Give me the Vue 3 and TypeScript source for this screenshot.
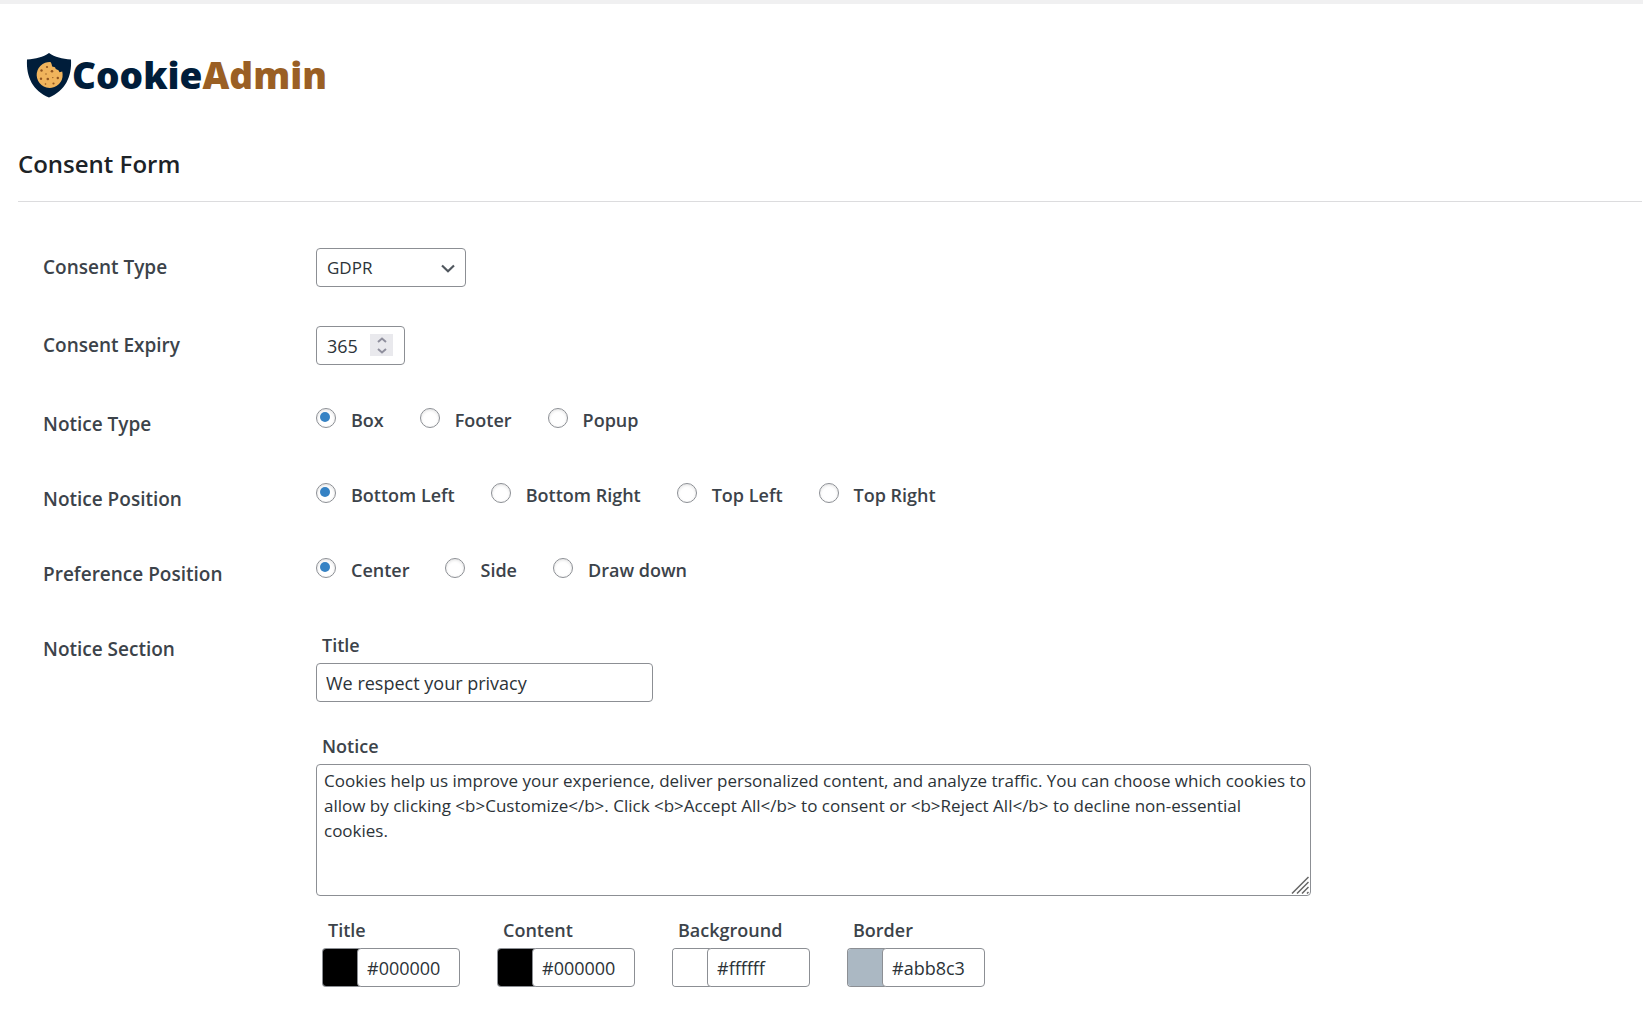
<script setup lang="ts">
import { reactive } from 'vue'

interface RadioRow {
  key: 'noticeType' | 'noticePosition' | 'preferencePosition'
  label: string
  options: string[]
}

interface ColorField {
  id: string
  label: string
  value: string
}

const radioRows: RadioRow[] = [
  { key: 'noticeType', label: 'Notice Type', options: ['Box', 'Footer', 'Popup'] },
  {
    key: 'noticePosition',
    label: 'Notice Position',
    options: ['Bottom Left', 'Bottom Right', 'Top Left', 'Top Right'],
  },
  { key: 'preferencePosition', label: 'Preference Position', options: ['Center', 'Side', 'Draw down'] },
]

const form = reactive({
  consentType: 'GDPR',
  expiry: 365,
  noticeType: 'Box',
  noticePosition: 'Bottom Left',
  preferencePosition: 'Center',
  title: 'We respect your privacy',
  notice:
    'Cookies help us improve your experience, deliver personalized content, and analyze traffic. You can choose which cookies to allow by clicking <b>Customize</b>. Click <b>Accept All</b> to consent or <b>Reject All</b> to decline non-essential cookies.',
})

const colors = reactive<ColorField[]>([
  { id: 'color-title', label: 'Title', value: '#000000' },
  { id: 'color-content', label: 'Content', value: '#000000' },
  { id: 'color-background', label: 'Background', value: '#ffffff' },
  { id: 'color-border', label: 'Border', value: '#abb8c3' },
])
</script>

<template>
  <main class="page">
    <header class="logo">
      <svg class="shield" viewBox="0 0 46 46" aria-hidden="true">
        <path
          d="M23 1C17 5 10 7 1 7.500C0 25 7 39 23 45.500C39 39 46 25 45 7.500C36 7 29 5 23 1Z"
          fill="#001d3a"
        />
        <path
          d="M24.500 10A13 13 0 1 0 36.200 19.500L33.500 20.200L32.500 18.200L29.800 17L29 15.200L26.200 14.500L25.500 11.800Z"
          fill="#f0b45c"
        />
        <g fill="#8f5420">
          <circle cx="15.500" cy="18.500" r="1.200" />
          <circle cx="21" cy="15" r="1.100" />
          <circle cx="26" cy="19.200" r="1.300" />
          <circle cx="20" cy="22" r="0.700" />
          <circle cx="15" cy="26.800" r="1.200" />
          <circle cx="21.800" cy="27" r="1.300" />
          <circle cx="26.800" cy="25.600" r="0.700" />
          <circle cx="31.800" cy="26" r="1.200" />
          <circle cx="27.500" cy="31.500" r="1.100" />
          <circle cx="19.500" cy="32" r="0.800" />
        </g>
      </svg>
      <span class="wordmark">Cookie<span class="accent">Admin</span></span>
    </header>

    <h1 class="heading">Consent Form</h1>

    <form class="form" @submit.prevent>
      <div class="row">
        <label class="row-label" for="consent-type">Consent Type</label>
        <div class="select">
          <select id="consent-type" v-model="form.consentType" class="control">
            <option>GDPR</option>
            <option>CCPA</option>
          </select>
          <svg class="chevron" viewBox="0 0 14 9" aria-hidden="true">
            <path d="M1 1.500L7 7.200L13 1.500" fill="none" stroke="#50575e" stroke-width="2.200" />
          </svg>
        </div>
      </div>

      <div class="row">
        <label class="row-label" for="consent-expiry">Consent Expiry</label>
        <div class="number">
          <input id="consent-expiry" v-model.number="form.expiry" class="control" type="number" />
          <div class="spinner">
            <button type="button" aria-label="Increase" @click="form.expiry++">
              <svg viewBox="0 0 10 6"><path d="M1 5L5 1.500L9 5" /></svg>
            </button>
            <button type="button" aria-label="Decrease" @click="form.expiry--">
              <svg viewBox="0 0 10 6"><path d="M1 1L5 4.500L9 1" /></svg>
            </button>
          </div>
        </div>
      </div>

      <div v-for="row in radioRows" :key="row.key" class="row radio-row" role="radiogroup" :aria-labelledby="row.key">
        <span :id="row.key" class="row-label group-label">{{ row.label }}</span>
        <div class="radios">
          <label v-for="option in row.options" :key="option" class="radio">
            <input v-model="form[row.key]" type="radio" :name="row.key" :value="option" />
            {{ option }}
          </label>
        </div>
      </div>

      <div class="row" role="group" aria-labelledby="notice-section">
        <span id="notice-section" class="row-label group-label">Notice Section</span>
        <div class="section">
          <div class="field">
            <label for="notice-title">Title</label>
            <input id="notice-title" v-model="form.title" class="control title-input" type="text" />
          </div>
          <div class="field">
            <label for="notice-text">Notice</label>
            <div class="textarea">
              <textarea id="notice-text" v-model="form.notice" class="control"></textarea>
              <svg class="grip" viewBox="0 0 18 18" aria-hidden="true">
                <path d="M1 17.500L17.500 1M6 17.500L17.500 6M11 17.500L17.500 11M16 17.500L17.500 16" />
              </svg>
            </div>
          </div>
          <div class="colors">
            <div v-for="color in colors" :key="color.id" class="color">
              <label :for="color.id">{{ color.label }}</label>
              <div class="color-control">
                <input v-model="color.value" class="swatch" type="color" :aria-label="color.label + ' swatch'" />
                <input :id="color.id" v-model="color.value" class="control hex" type="text" />
              </div>
            </div>
          </div>
        </div>
      </div>
    </form>
  </main>
</template>

<style>
body {
  margin: 0;
  background: #fff;
}
</style>

<style scoped>
.page {
  box-sizing: border-box;
  border-top: 4px solid #f0f0f1;
  padding: 48px 1px 32px 18px;
  font-family: 'Open Sans', 'Noto Sans', sans-serif;
  font-size: 18px;
  color: #3c434a;
  overflow: hidden;
}

.logo {
  display: flex;
  align-items: center;
  height: 46px;
  padding-left: 8px;
}

.shield {
  width: 46px;
  height: 46px;
}

.wordmark {
  font-size: 37px;
  font-weight: 800;
  line-height: 46px;
  color: #001d3a;
}

.accent {
  color: #9a5f24;
}

.heading {
  margin: 46px 0 0;
  padding-bottom: 17px;
  border-bottom: 1px solid #dcdcde;
  font-size: 24px;
  font-weight: 600;
  line-height: 40px;
  color: #1d2327;
}

.form {
  display: flex;
  flex-direction: column;
  gap: 39px;
  padding: 46px 24px 0 25px;
}

.row {
  display: grid;
  grid-template-columns: 273px 1fr;
  align-items: start;
}

.radio-row {
  height: 36px;
}

.row-label {
  font-size: 19px;
  font-weight: 600;
  line-height: 39px;
}

.group-label {
  line-height: 41px;
}

.control {
  box-sizing: border-box;
  margin: 0;
  height: 39px;
  padding: 0 9px;
  border: 1px solid #8c8f94;
  border-radius: 4px;
  background: #fff;
  font: inherit;
  color: #2c3338;
  outline: none;
}

.select,
.number,
.textarea {
  position: relative;
}

.select {
  width: 150px;
}

.select select {
  width: 100%;
  padding: 0 10px;
  font-size: 17px;
  appearance: none;
}

.chevron {
  position: absolute;
  top: 16px;
  right: 11px;
  width: 14px;
  height: 9px;
  pointer-events: none;
}

.number {
  width: 89px;
}

.number input {
  width: 100%;
  padding: 0 10px;
  appearance: textfield;
}

.number input::-webkit-inner-spin-button {
  display: none;
}

.spinner {
  position: absolute;
  top: 8px;
  right: 12px;
  display: flex;
  flex-direction: column;
  width: 23px;
  height: 22px;
  background: #e9e9ed;
}

.spinner button {
  display: flex;
  flex: 1;
  align-items: center;
  justify-content: center;
  padding: 0;
  border: 0;
  background: none;
}

.spinner svg {
  width: 10px;
  height: 6px;
  fill: none;
  stroke: #8f8f9d;
  stroke-width: 2;
}

.radios {
  display: flex;
  flex-wrap: wrap;
  gap: 36px;
}

.radio {
  display: flex;
  gap: 15px;
  font-weight: 600;
  line-height: 32px;
}

.radio input {
  box-sizing: border-box;
  flex: none;
  width: 20px;
  height: 20px;
  margin: 4px 0 0;
  padding: 3px;
  border: 1px solid #8c8f94;
  border-radius: 50%;
  background: #fff;
  box-shadow: inset 0 1px 3px rgba(0, 0, 0, 0.12);
  appearance: none;
}

.radio input:checked::before {
  content: '';
  display: block;
  width: 10px;
  height: 10px;
  border-radius: 50%;
  background: #3582c4;
}

.field label,
.color label {
  display: block;
  padding: 0 6px 2px;
  font-weight: 600;
  line-height: 32px;
}

.field {
  margin-bottom: 28px;
}

.title-input {
  width: 337px;
}

.textarea {
  max-width: 995px;
}

.textarea textarea {
  display: block;
  width: 100%;
  height: 132px;
  padding: 3px 2px 3px 7px;
  font-size: 17px;
  line-height: 25px;
  resize: none;
}

.grip {
  position: absolute;
  right: 2px;
  bottom: 2px;
  width: 18px;
  height: 18px;
  fill: none;
  stroke: #666;
  stroke-width: 1.5;
}

.colors {
  display: flex;
  flex-wrap: wrap;
  gap: 37px;
  margin-top: -10px;
  padding-left: 6px;
}

.color-control {
  display: flex;
}

.swatch {
  box-sizing: border-box;
  width: 38px;
  height: 39px;
  margin: 0 -3px 0 0;
  padding: 0;
  border: 1px solid #8c8f94;
  border-right: 0;
  border-radius: 4px 0 0 4px;
  background: none;
  overflow: hidden;
  appearance: none;
}

.swatch::-webkit-color-swatch-wrapper {
  padding: 0;
}

.swatch::-webkit-color-swatch {
  border: 0;
  border-radius: 0;
}

.hex {
  position: relative;
  width: 103px;
}
</style>
